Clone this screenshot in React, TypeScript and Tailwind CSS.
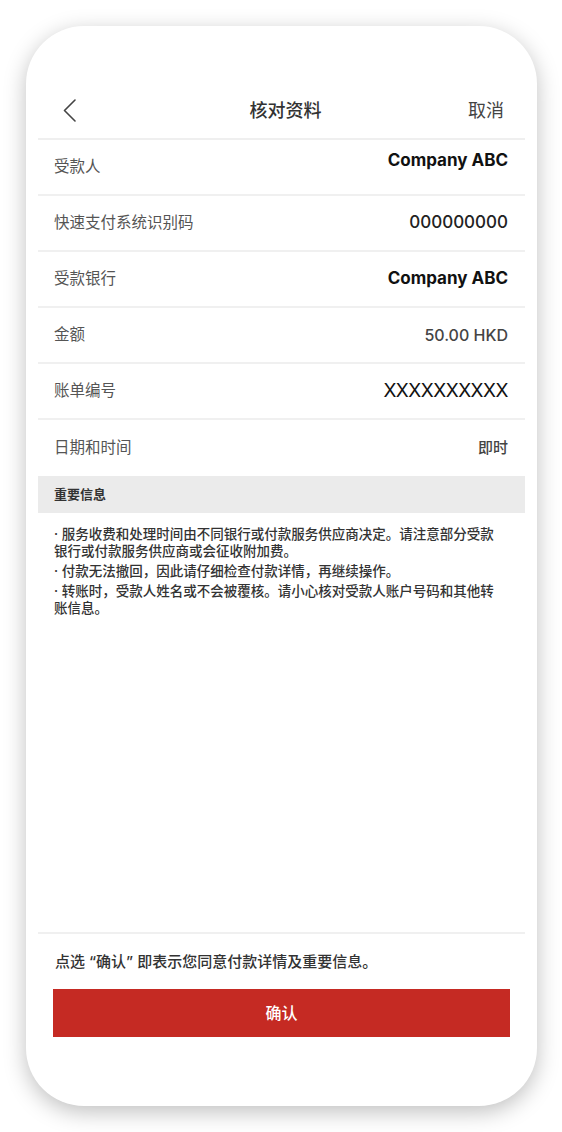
import React from 'react';

const rows = [
  { label: '受款人', value: 'Company ABC', cls: 'text-[17px] font-bold text-[#111] mb-[12px]' },
  { label: '快速支付系统识别码', value: '000000000', cls: 'text-[17px] font-medium text-[#222]' },
  { label: '受款银行', value: 'Company ABC', cls: 'text-[17px] font-bold text-[#111]' },
  { label: '金额', value: '50.00 HKD', cls: 'text-[16px] font-medium text-[#444]' },
  { label: '账单编号', value: 'XXXXXXXXXX', cls: 'text-[19px] font-normal text-[#111] tracking-[-0.5px]' },
  { label: '日期和时间', value: '即时', cls: 'text-[15px] font-medium text-[#444]' },
];

const notes = [
  '服务收费和处理时间由不同银行或付款服务供应商决定。请注意部分受款银行或付款服务供应商或会征收附加费。',
  '付款无法撤回，因此请仔细检查付款详情，再继续操作。',
  '转账时，受款人姓名或不会被覆核。请小心核对受款人账户号码和其他转账信息。',
];

export default function App() {
  return (
    <div
      className="w-[562px] h-[1132px] bg-white pt-[26px] pl-[26px]"
      style={{ fontFamily: 'Inter, "Noto Sans CJK SC", sans-serif' }}
    >
      <div className="w-[511px] h-[1080px] bg-white rounded-[58px] shadow-[0_6px_22px_rgba(0,0,0,0.25)] px-[12px] pt-[56px] flex flex-col">
        {/* header */}
        <div className="h-[58px] border-b-2 border-[#efefef] flex items-center">
          <svg className="ml-[25px] w-[13px] h-[23px]" viewBox="0 0 13 23" fill="none">
            <polyline points="12,1 1.5,11.5 12,22" stroke="#444" strokeWidth="1.6" strokeLinecap="round" strokeLinejoin="round" />
          </svg>
          <div className="flex-1 text-center text-[18px] font-medium text-[#333] -ml-[13px] mr-[-40px]">
            核对资料
          </div>
          <div className="text-[18px] text-[#444] mr-[21px]">取消</div>
        </div>

        {/* rows */}
        {rows.map((r, i) => (
          <div
            key={r.label}
            className={`h-[56px] flex items-center justify-between pl-[16px] pr-[17px] ${
              i < rows.length - 1 ? 'border-b-2 border-[#f0f0f0]' : ''
            }`}
          >
            <span className="text-[15.5px] text-[#555]">{r.label}</span>
            <span className={r.cls}>{r.value}</span>
          </div>
        ))}

        {/* important info */}
        <div className="h-[37px] bg-[#ebebeb] flex items-center pl-[16px]">
          <span className="text-[13px] font-bold text-[#333]">重要信息</span>
        </div>
        <div className="pl-[16px] pr-[24px] pt-[13px]">
          {notes.map((n) => (
            <p key={n} className="text-[13.5px] leading-[17px] font-medium text-[#333] mb-[3px]">
              · {n}
            </p>
          ))}
        </div>

        <div className="flex-1" />

        {/* footer */}
        <div className="border-t-2 border-[#f0f0f0] pb-[69px]">
          <p className="mt-[18px] pl-[17px] text-[15px] leading-[20px] font-medium text-[#333]">
            点选 “确认” 即表示您同意付款详情及重要信息。
          </p>
          <button className="mt-[17px] ml-[15px] w-[457px] h-[48px] bg-[#c52a23] text-white text-[16px] font-medium">
            确认
          </button>
        </div>
      </div>
    </div>
  );
}
